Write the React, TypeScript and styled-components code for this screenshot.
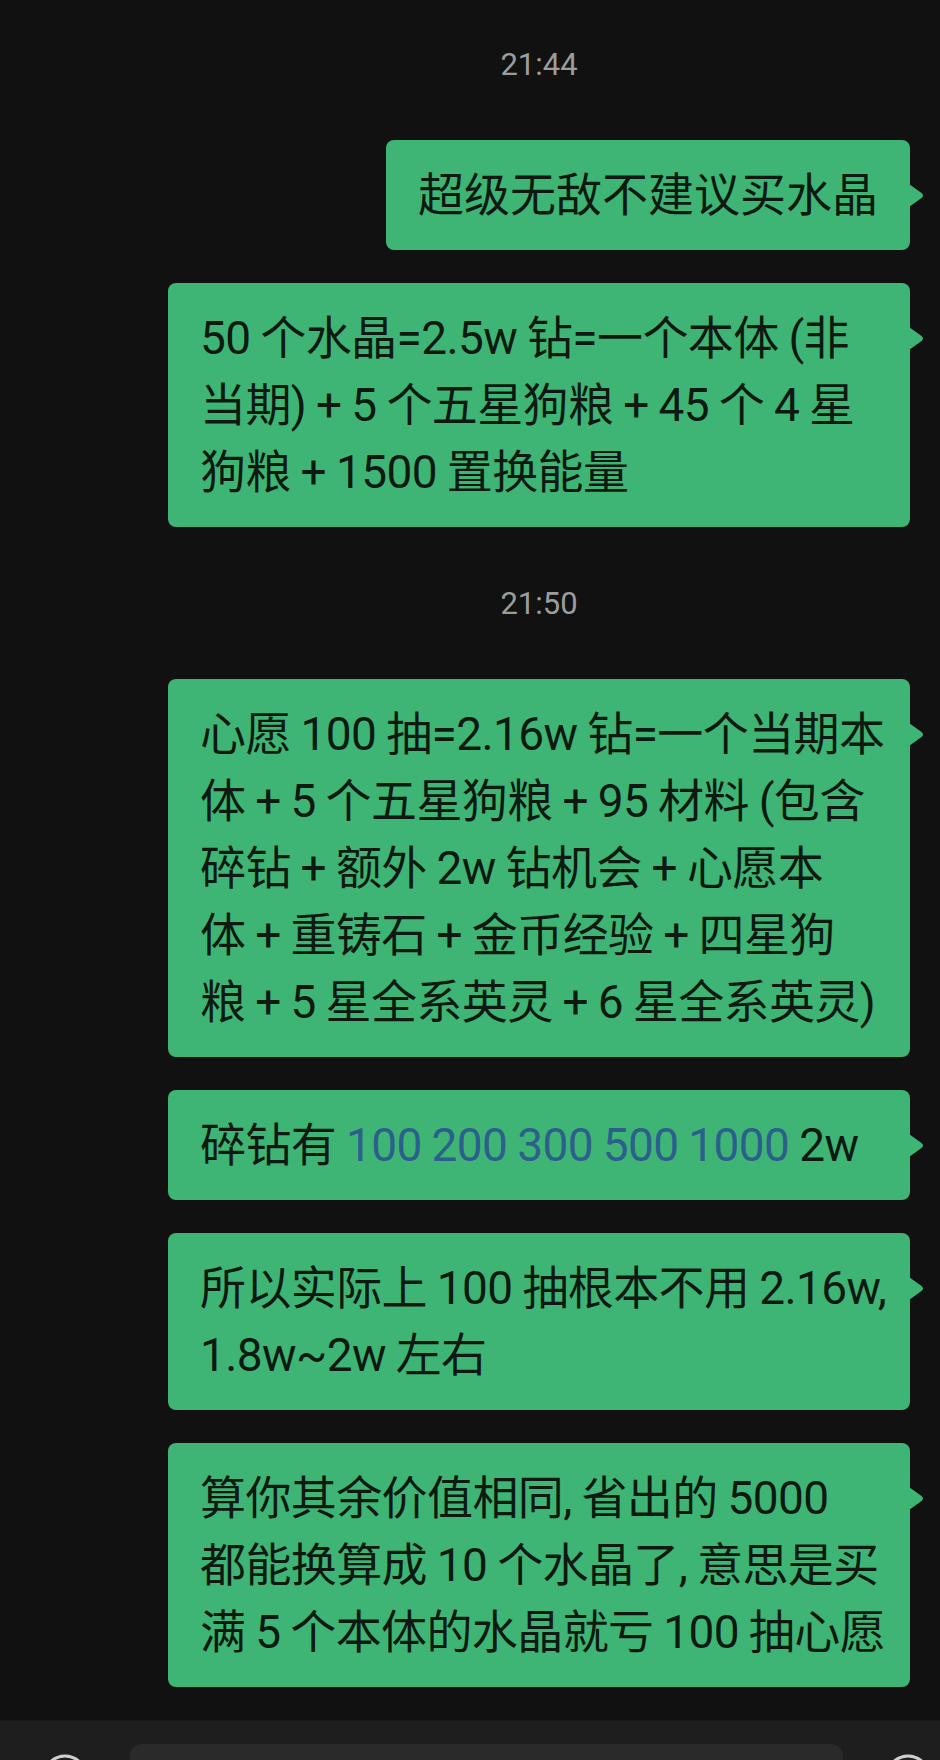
import styled, { createGlobalStyle } from "styled-components";

/***** Global ******/
const GlobalStyle = createGlobalStyle`
  html, body {
    margin: 0;
    padding: 0;
    background: #111111;
  }
  body {
    font-family: Roboto, "Noto Sans CJK SC", sans-serif;
  }
`;

/***** Styled ******/
const Screen = styled.div`
  width: 940px;
  height: 1760px;
  overflow: hidden;
  display: flex;
  flex-direction: column;
  background: #111111;
`;

const ChatList = styled.div`
  display: flex;
  flex-direction: column;
  align-items: flex-end;
  gap: 33px;
  padding: 21px 30px 33px 0;
`;

const TimeRow = styled.div`
  align-self: stretch;
  height: 86px;
  padding-left: 168px;
  display: flex;
  align-items: center;
  justify-content: center;
  font-family: Roboto, sans-serif;
  font-size: 31px;
  color: #9c9c9c;
`;

const Bubble = styled.div<{ $wide?: boolean }>`
  position: relative;
  box-sizing: border-box;
  width: ${(props) => (props.$wide ? "742px" : "auto")};
  padding: 22px 32px 21px;
  border-radius: 8px;
  background: #3eb575;
  color: #0e1a11;
  font-size: 46px;
  line-height: 67px;
  letter-spacing: ${(props) => (props.$wide ? "-0.6px" : "0")};
  word-spacing: -1px;
  white-space: nowrap;
`;

const Tail = styled.svg`
  position: absolute;
  top: 44px;
  right: -15px;
  width: 16px;
  height: 23px;
`;

const Link = styled.span`
  color: #2d5f8c;
`;

const InputBar = styled.div`
  flex-shrink: 0;
  height: 120px;
  display: flex;
  align-items: flex-start;
  padding-top: 23px;
  background: #1e1e1e;
  border-top: 1px solid #181818;
`;

const IconSlot = styled.div<{ $side: "left" | "right" }>`
  display: flex;
  justify-content: center;
  width: ${(props) => (props.$side === "left" ? "130px" : "65px")};
  padding-left: ${(props) => (props.$side === "right" ? "32px" : "0")};
  padding-top: 9px;
`;

const InputBox = styled.div`
  width: 713px;
  height: 84px;
  border-radius: 12px;
  background: #2a2a2a;
`;

/***** Data ******/
type Part = string | { link: string };

interface Message {
  id: number;
  wide: boolean;
  lines: Part[][];
}

const firstGroup: Message[] = [
  { id: 1, wide: false, lines: [["超级无敌不建议买水晶"]] },
  {
    id: 2,
    wide: true,
    lines: [
      ["50 个水晶=2.5w 钻=一个本体 (非"],
      ["当期) + 5 个五星狗粮 + 45 个 4 星"],
      ["狗粮 + 1500 置换能量"],
    ],
  },
];

const secondGroup: Message[] = [
  {
    id: 3,
    wide: true,
    lines: [
      ["心愿 100 抽=2.16w 钻=一个当期本"],
      ["体 + 5 个五星狗粮 + 95 材料 (包含"],
      ["碎钻 + 额外 2w 钻机会 + 心愿本"],
      ["体 + 重铸石 + 金币经验 + 四星狗"],
      ["粮 + 5 星全系英灵 + 6 星全系英灵)"],
    ],
  },
  {
    id: 4,
    wide: true,
    lines: [
      [
        "碎钻有 ",
        { link: "100" },
        " ",
        { link: "200" },
        " ",
        { link: "300" },
        " ",
        { link: "500" },
        " ",
        { link: "1000" },
        " 2w",
      ],
    ],
  },
  {
    id: 5,
    wide: true,
    lines: [["所以实际上 100 抽根本不用 2.16w,"], ["1.8w~2w 左右"]],
  },
  {
    id: 6,
    wide: true,
    lines: [
      ["算你其余价值相同, 省出的 5000"],
      ["都能换算成 10 个水晶了, 意思是买"],
      ["满 5 个本体的水晶就亏 100 抽心愿"],
    ],
  },
];

function CircleIcon() {
  return (
    <svg width="48" height="48" viewBox="0 0 48 48">
      <circle cx="24" cy="24" r="21" fill="none" stroke="#cfcfcf" strokeWidth="3" />
    </svg>
  );
}

function ChatBubble({ msg }: { msg: Message }) {
  return (
    <Bubble $wide={msg.wide}>
      {msg.lines.map((line, i) => (
        <div key={i}>
          {line.map((part, j) =>
            typeof part === "string" ? (
              <span key={j}>{part}</span>
            ) : (
              <Link key={j}>{part.link}</Link>
            )
          )}
        </div>
      ))}
      <Tail viewBox="0 0 16 23">
        <path d="M0 0 L12.5 9 Q15.5 11.5 12.5 14 L0 23 Z" fill="#3eb575" />
      </Tail>
    </Bubble>
  );
}

function App() {
  return (
    <>
      <GlobalStyle />
      <Screen>
        <ChatList>
          <TimeRow>21:44</TimeRow>
          {firstGroup.map((msg) => (
            <ChatBubble key={msg.id} msg={msg} />
          ))}
          <TimeRow>21:50</TimeRow>
          {secondGroup.map((msg) => (
            <ChatBubble key={msg.id} msg={msg} />
          ))}
        </ChatList>
        <InputBar>
          <IconSlot $side="left">
            <CircleIcon />
          </IconSlot>
          <InputBox />
          <IconSlot $side="right">
            <CircleIcon />
          </IconSlot>
        </InputBar>
      </Screen>
    </>
  );
}

export default App;
